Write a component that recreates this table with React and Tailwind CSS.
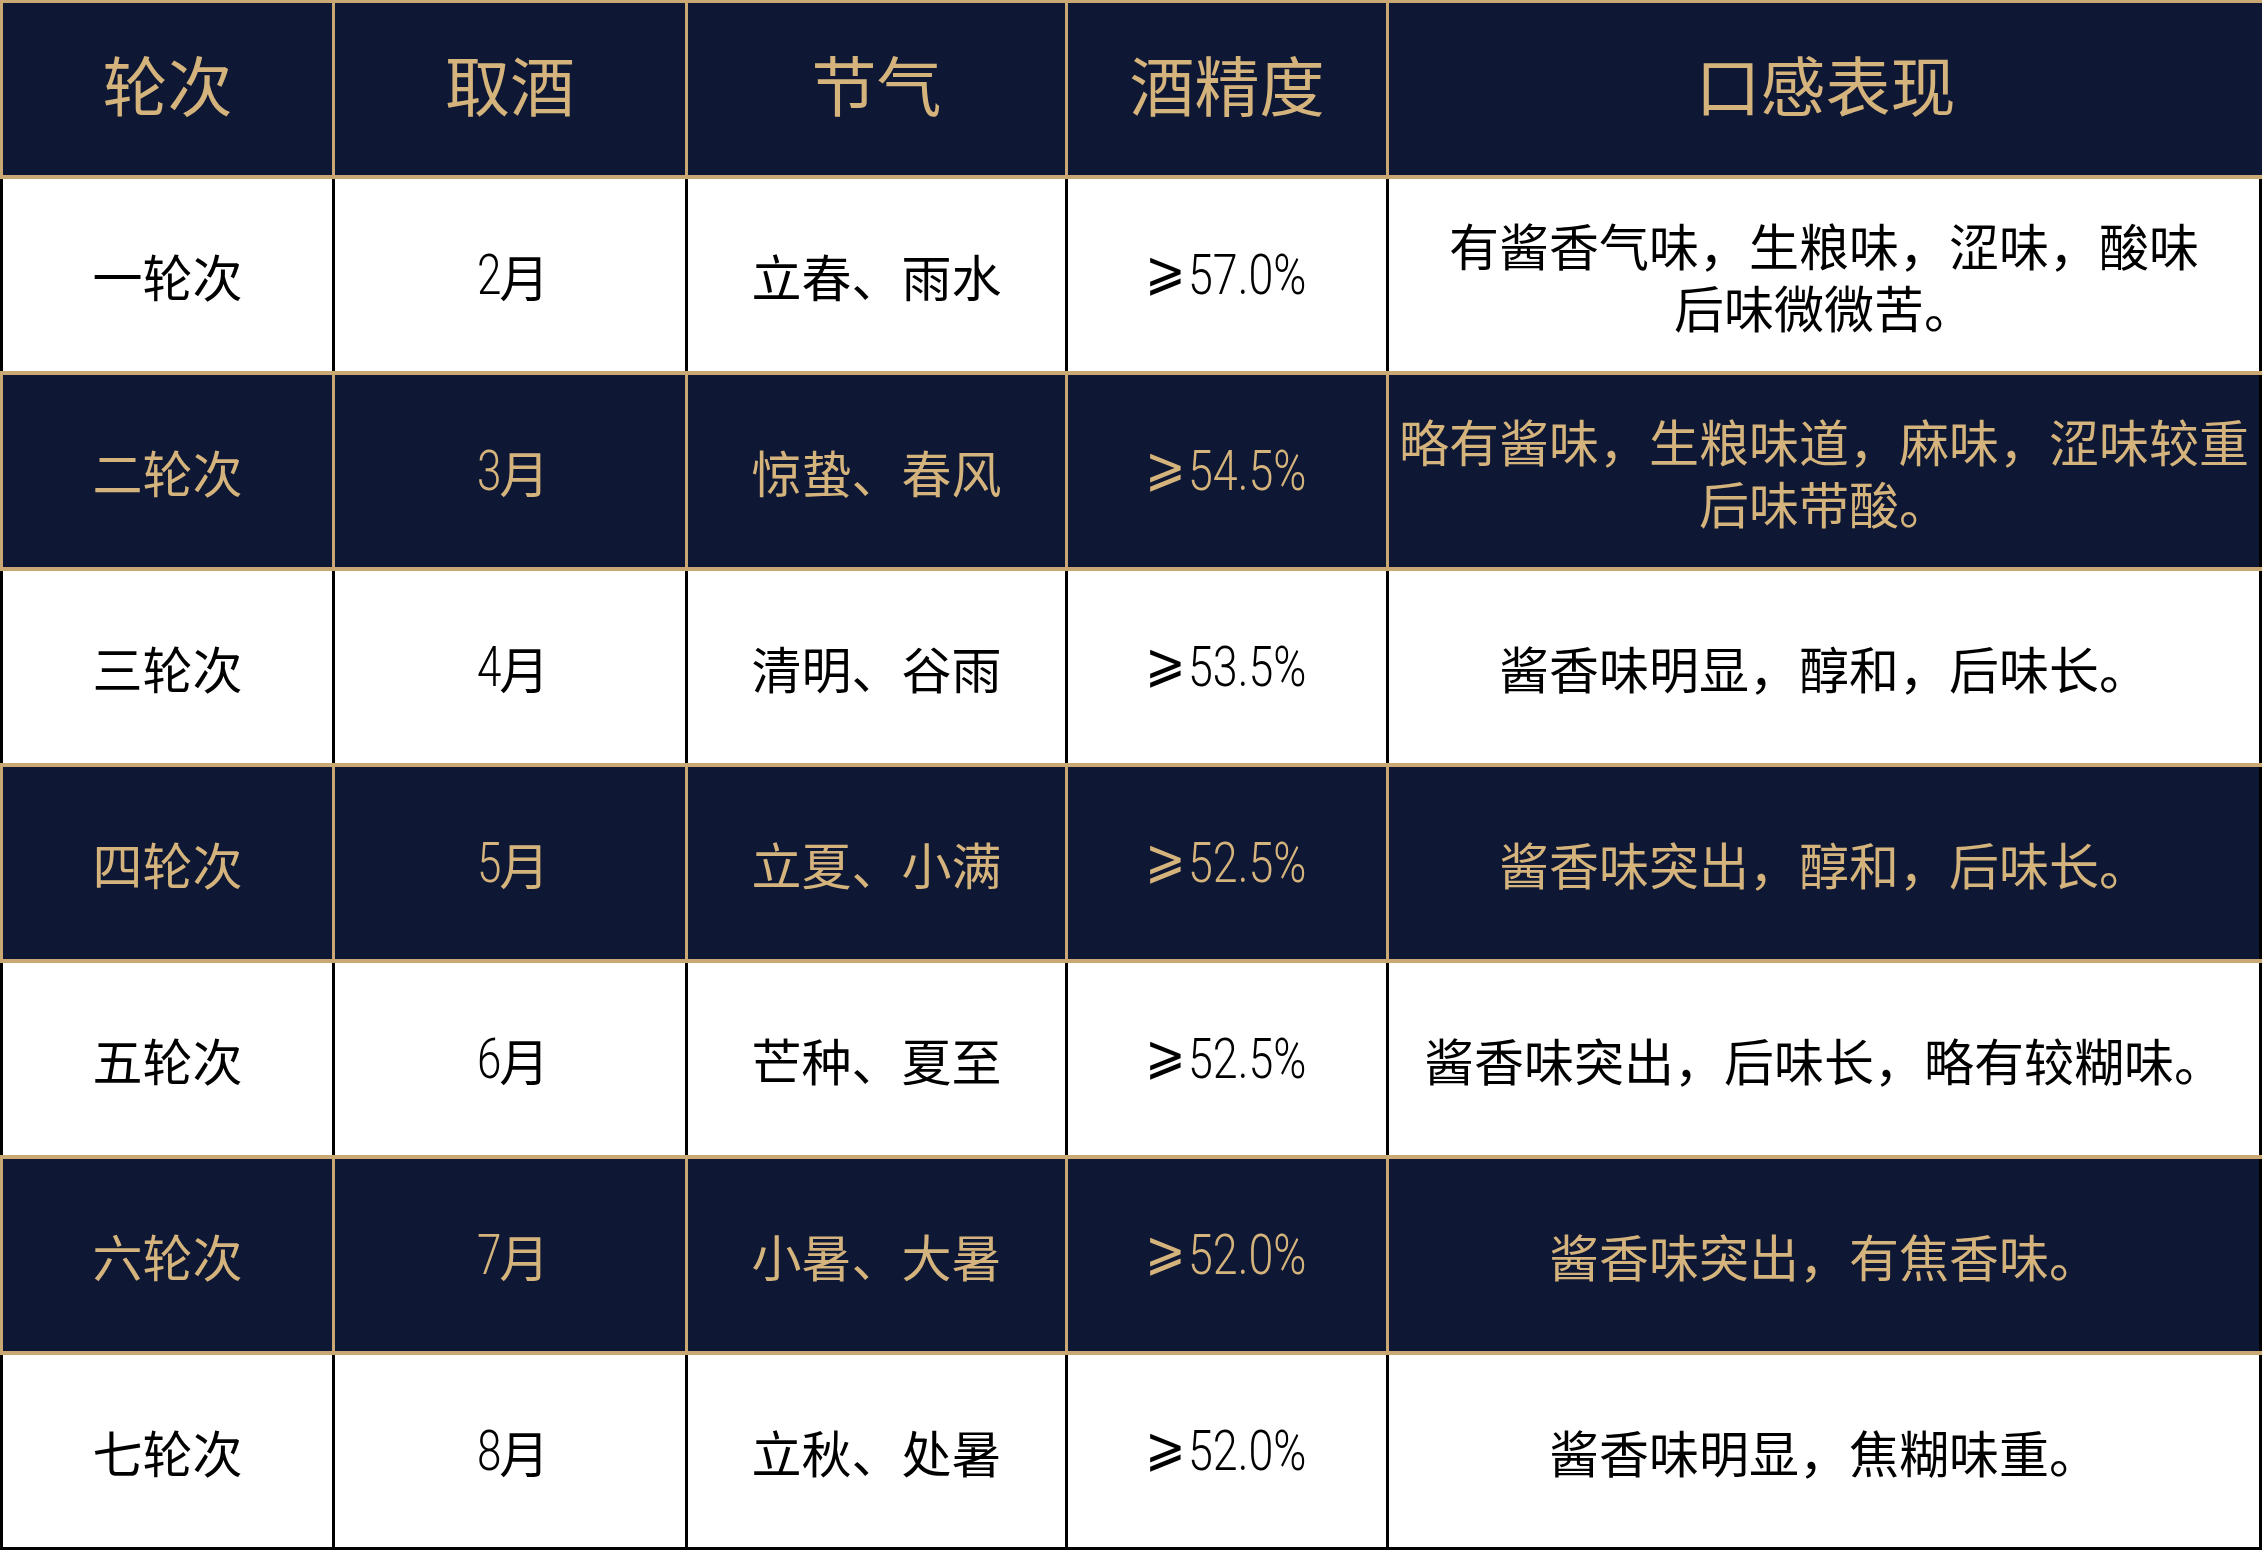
import React from "react";

const rows = [
  { r: "一轮次", m: "2", j: "立春、雨水", a: "57.0%", t: ["有酱香气味，生粮味，涩味，酸味", "后味微微苦。"] },
  { r: "二轮次", m: "3", j: "惊蛰、春风", a: "54.5%", t: ["略有酱味，生粮味道，麻味，涩味较重", "后味带酸。"] },
  { r: "三轮次", m: "4", j: "清明、谷雨", a: "53.5%", t: ["酱香味明显，醇和，后味长。"] },
  { r: "四轮次", m: "5", j: "立夏、小满", a: "52.5%", t: ["酱香味突出，醇和，后味长。"] },
  { r: "五轮次", m: "6", j: "芒种、夏至", a: "52.5%", t: ["酱香味突出，后味长，略有较糊味。"] },
  { r: "六轮次", m: "7", j: "小暑、大暑", a: "52.0%", t: ["酱香味突出，有焦香味。"] },
  { r: "七轮次", m: "8", j: "立秋、处暑", a: "52.0%", t: ["酱香味明显，焦糊味重。"] },
];

const cjk = { fontFamily: '"Noto Sans CJK SC", "Noto Sans", sans-serif' };
const num = { fontFamily: 'Roboto, "Liberation Sans", sans-serif' };

export default function App() {
  return (
    <div className="w-[2262px] h-[1550px] bg-black overflow-hidden" style={cjk}>
      {/* header */}
      <div className="flex h-[175px] bg-[#0e1733] border-t-[3px] border-[#c9a874] text-[#d4b37c] text-[65px] leading-none">
        <div className="w-[332px] border-l-[3px] border-[#c9a874] flex items-center justify-center pb-[12px]">轮次</div>
        <div className="w-[353px] border-l-[3px] border-[#c9a874] flex items-center justify-center pb-[12px]">取酒</div>
        <div className="w-[380px] border-l-[3px] border-[#c9a874] flex items-center justify-center pb-[12px]">节气</div>
        <div className="w-[321px] border-l-[3px] border-[#c9a874] flex items-center justify-center pb-[12px]">酒精度</div>
        <div className="flex-1 border-l-[3px] border-[#c9a874] flex items-center justify-center pb-[12px]">口感表现</div>
      </div>
      {rows.map((row, i) => {
        const dark = i % 2 === 1;
        const cell = dark
          ? "border-l-[3px] border-[#c9a874] bg-[#0e1733] text-[#d4b37c] flex items-center justify-center"
          : "border-l-[3px] border-black bg-white text-black flex items-center justify-center";
        return (
          <div key={i} className="flex h-[196px] border-t-[4px] border-[#c9a874] text-[50px] leading-[62px]">
            <div className={`w-[332px] ${cell}`}>{row.r}</div>
            <div className={`w-[353px] ${cell}`}>
              <span style={num} className="inline-block text-[55px] font-light scale-x-[0.8] origin-right -mr-[2px]">{row.m}</span>
              <span>月</span>
            </div>
            <div className={`w-[380px] ${cell}`}>{row.j}</div>
            <div className={`w-[321px] ${cell}`}>
              <div className="inline-flex items-center">
                <span className="inline-block text-[54px] font-light scale-x-[0.9] -translate-y-[4px]" style={{ fontFamily: '"DejaVu Sans", sans-serif' }}>⩾</span>
                <span style={num} className="inline-block text-[56px] font-light scale-x-[0.8] origin-left -mr-[24px]">{row.a}</span>
              </div>
            </div>
            <div className={`flex-1 mr-[3px] ${cell} flex-col text-center whitespace-nowrap`}>
              {row.t.map((l, k) => (
                <div key={k}>{l}</div>
              ))}
            </div>
          </div>
        );
      })}
    </div>
  );
}
